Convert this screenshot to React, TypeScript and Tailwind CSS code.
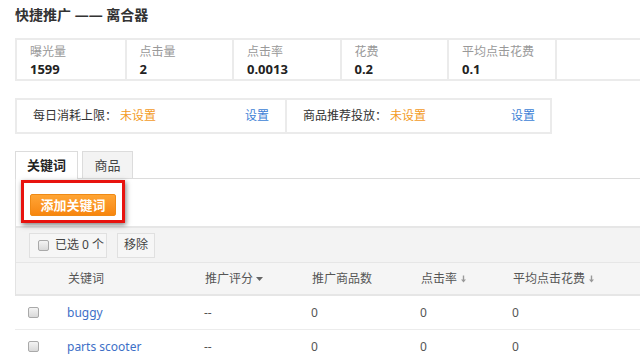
import React from 'react';

const stats = [
  { label: '曝光量', value: '1599' },
  { label: '点击量', value: '2' },
  { label: '点击率', value: '0.0013' },
  { label: '花费', value: '0.2' },
  { label: '平均点击花费', value: '0.1' },
  { label: '', value: '' },
];

const rows = [
  { keyword: 'buggy', score: '--', goods: '0', ctr: '0', cpc: '0' },
  { keyword: 'parts scooter', score: '--', goods: '0', ctr: '0', cpc: '0' },
];

function Checkbox() {
  return (
    <span className="inline-block shrink-0 w-[11px] h-[11px] rounded-[2px] border border-[#a9a9a9] bg-gradient-to-b from-[#f4f4f4] to-[#d9d9d9]" />
  );
}

function DownArrow() {
  return (
    <svg width="7" height="8" viewBox="0 0 7 8" className="inline-block ml-[3px]">
      <path d="M3.5 0.5 V5" stroke="#999" strokeWidth="1.4" />
      <path d="M1 4.5 L3.5 7.5 L6 4.5 Z" fill="#999" />
    </svg>
  );
}

export default function App() {
  return (
    <div
      className="w-[640px] h-[356px] overflow-hidden bg-white text-[#333] relative"
      style={{ fontFamily: '"Noto Sans", "Noto Sans CJK SC", sans-serif' }}
    >
      <div className="pl-[15px]">
        <h1 className="pt-[5px] h-[38px] text-[14px] font-bold leading-[20px] text-[#333]">快捷推广 —— 离合器</h1>

        {/* stats */}
        <div className="flex h-[43px] w-[700px] border-2 border-[#ebebeb]">
          {stats.map((s, i) => (
            <div
              key={i}
              className={`w-[107.5px] shrink-0 pl-[13px] pt-[4px] ${i > 0 ? 'border-l-2 border-[#ebebeb]' : ''}`}
            >
              <div className="text-[12px] leading-[16px] text-[#999]">{s.label}</div>
              <div className="text-[13px] leading-[18px] font-bold text-[#222]">{s.value}</div>
            </div>
          ))}
        </div>

        {/* limits */}
        <div className="mt-[17px] flex w-[537px] h-[36px] border-2 border-[#ebebeb] text-[12px] leading-[32px]">
          <div className="w-[268px] flex justify-between pl-[16px] pr-[16px]">
            <span>
              每日消耗上限：<span className="ml-[3px] text-[#f39b1f]">未设置</span>
            </span>
            <span className="text-[#3d7fd6]">设置</span>
          </div>
          <div className="flex-1 flex justify-between border-l-2 border-[#ebebeb] pl-[16px] pr-[15px]">
            <span>
              商品推荐投放：<span className="ml-[3px] text-[#f39b1f]">未设置</span>
            </span>
            <span className="text-[#3d7fd6]">设置</span>
          </div>
        </div>

        {/* tabs */}
        <div className="mt-[17px] flex items-end gap-[4px] h-[28px] border-b border-[#dcdcdc]">
          <div className="w-[63px] h-[28px] -mb-px border border-b-0 border-[#dcdcdc] bg-white text-[13px] font-bold leading-[26px] text-center text-[#222]">
            关键词
          </div>
          <div className="w-[51px] h-[27px] border border-b-0 border-[#dcdcdc] bg-[#f3f3f3] text-[13px] leading-[26px] text-center text-[#444]">
            商品
          </div>
        </div>

        {/* tab content */}
        <div className="border-l border-[#e3e3e3]">
          <div className="h-[47px] pl-[14px] pt-[13px]">
            <button className="w-[86px] h-[22px] rounded-[2px] bg-gradient-to-b from-[#ffa534] to-[#f7860c] border border-[#ef8a15] text-white text-[13px] font-bold leading-[20px]">
              添加关键词
            </button>
          </div>

          <div className="h-[36px] bg-[#f3f3f3] border-t-2 border-[#e6e6e6] flex items-center gap-[10px] pl-[13px]">
            <div className="h-[25px] w-[78px] flex items-center gap-[6px] pl-[8px] border border-[#e0e0e0] bg-[#f6f6f6] text-[12px] text-[#444] whitespace-nowrap">
              <Checkbox />
              <span>已选 0 个</span>
            </div>
            <div className="h-[25px] w-[38px] flex items-center justify-center border border-[#e0e0e0] bg-[#f6f6f6] text-[12px] text-[#444]">
              移除
            </div>
          </div>

          <div className="h-[34px] bg-[#f5f5f5] border-t border-b-2 border-[#e6e6e6] flex items-center text-[12px] text-[#555]">
            <div className="w-[52px]" />
            <div className="w-[137px]">关键词</div>
            <div className="w-[107px] flex items-center">
              推广评分
              <svg width="7" height="4" viewBox="0 0 7 4" className="ml-[3px]">
                <path d="M0 0 H7 L3.5 4 Z" fill="#666" />
              </svg>
            </div>
            <div className="w-[109px]">推广商品数</div>
            <div className="w-[92px] flex items-center">
              点击率
              <DownArrow />
            </div>
            <div className="flex items-center">
              平均点击花费
              <DownArrow />
            </div>
          </div>
        </div>

        {rows.map((r, i) => (
          <div key={i} className="h-[34px] flex items-center border-b border-[#ececec] text-[12px] text-[#555]">
            <div className="w-[52px] pl-[13px] flex items-center">
              <Checkbox />
            </div>
            <div className="w-[137px] text-[#3d6fc7]">{r.keyword}</div>
            <div className="w-[107px]">{r.score}</div>
            <div className="w-[109px]">{r.goods}</div>
            <div className="w-[92px]">{r.ctr}</div>
            <div>{r.cpc}</div>
          </div>
        ))}
      </div>

      {/* highlight annotation */}
      <div className="absolute left-[21px] top-[180px] w-[104px] h-[43px] border-[3px] border-[#e8130f] shadow-[1px_2px_5px_rgba(0,0,0,0.5)]" />
    </div>
  );
}
